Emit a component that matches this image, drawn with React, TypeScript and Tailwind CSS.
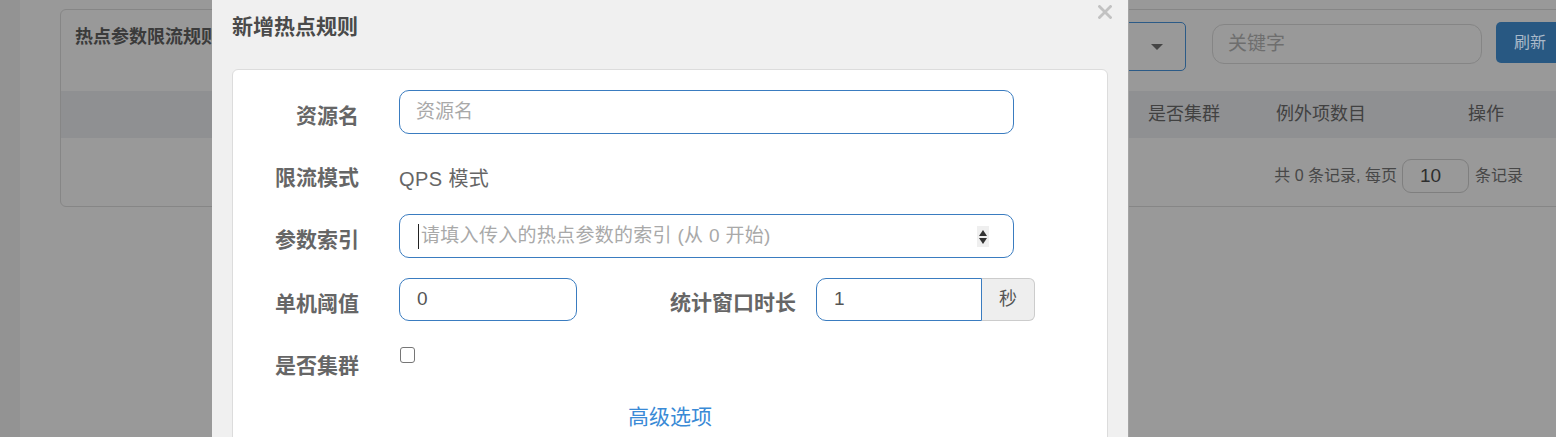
import React from "react";

const font = "font-['Liberation_Sans','Noto_Sans_CJK_SC',sans-serif]";

function Spinner() {
  return (
    <svg width="12" height="21" viewBox="0 0 12 21">
      <rect x="0" y="0" width="12" height="21" fill="#efefef" />
      <polygon points="2,10 10,10 6,4" fill="#333" />
      <polygon points="2,12 10,12 6,18" fill="#333" />
    </svg>
  );
}

function CloseIcon() {
  return (
    <svg width="14" height="14" viewBox="0 0 14 14" aria-label="close">
      <path d="M1.5 1.5 L12.5 12.5 M12.5 1.5 L1.5 12.5" stroke="#c2c2c2" strokeWidth="2.8" strokeLinecap="square" />
    </svg>
  );
}

function Label(props: { children: React.ReactNode }) {
  return (
    <div className="w-[126px] shrink-0 text-right pt-[11px] text-[21px] leading-[30px] font-bold text-[#666]">
      {props.children}
    </div>
  );
}

function BackgroundPage() {
  return (
    <div className="flex h-full">
      <div className="w-[20px] shrink-0 bg-[#939393]" />
      <div className="pl-[40px] pt-[9px]">
        <div className="w-[1520px] h-[198px] border border-[#868686] rounded-[6px] overflow-hidden">
          <div className="flex justify-between h-[81px]">
            <div className="pl-[14px] pt-[14px] text-[18px] leading-[26px] font-bold text-[#3b3b3b]">热点参数限流规则</div>
            <div className="flex items-start pt-[12px] pr-[15px]">
              <div className="w-[300px] h-[49px] border border-[#2c5b87] rounded-[5px] flex items-center justify-end pr-[22px]">
                <svg width="12" height="6" viewBox="0 0 12 6">
                  <polygon points="0,0 12,0 6,6" fill="#454545" />
                </svg>
              </div>
              <div className="ml-[26px] mt-[2px] w-[270px] h-[40px] rounded-[12px] border border-[#858585] pl-[15px] flex items-center text-[19px] text-[#6e6e6e]">
                关键字
              </div>
              <div className="ml-[14px] w-[68px] h-[41px] rounded-[5px] bg-[#285882] flex items-center justify-center text-[16px] text-[#a9b9c9]">
                刷新
              </div>
            </div>
          </div>
          <div className="flex justify-end items-center h-[47px] bg-[#8f9092] text-[18px] text-[#414141]">
            <div className="w-[128px]">是否集群</div>
            <div className="w-[192px]">例外项数目</div>
            <div className="w-[111px]">操作</div>
          </div>
          <div className="flex justify-end items-center pr-[56px] mt-[21px] text-[16px] text-[#474747]">
            <span>共 0 条记录, 每页</span>
            <div className="ml-[5px] w-[67px] h-[34px] rounded-[9px] border border-[#7f7f7f] pl-[17px] flex items-center text-[19px] text-[#2e2e2e]">
              10
            </div>
            <span className="ml-[6px]">条记录</span>
          </div>
        </div>
      </div>
    </div>
  );
}

function Modal() {
  return (
    <div className="absolute left-[212px] top-0 w-[917px] h-[520px] bg-[#f0f0f0] border-r border-[#a4a4a4]">
      <div className="flex justify-between h-[69px]">
        <div className="pl-[20px] pt-[12px] text-[21px] leading-[30px] font-bold text-[#4a4a4a]">新增热点规则</div>
        <div className="pr-[16px] pt-[5px]">
          <CloseIcon />
        </div>
      </div>
      <div className="mx-[20px] h-[430px] bg-white border border-[#dcdcdc] rounded-[6px] pt-[20px]">
        <div className="flex items-start h-[44px] mb-[18px]">
          <Label>资源名</Label>
          <div className="ml-[40px] w-[615px] h-[44px] rounded-[10px] border border-[#3a7cc0] pl-[16px] flex items-center text-[19px] text-[#a9a9a9]">
            资源名
          </div>
        </div>

        <div className="flex items-start h-[44px] mb-[18px]">
          <Label>限流模式</Label>
          <div className="ml-[40px] pt-[12px] text-[20px] leading-[30px] tracking-[0.4px] text-[#666]">QPS 模式</div>
        </div>

        <div className="flex items-start h-[44px] mb-[20px]">
          <Label>参数索引</Label>
          <div className="ml-[40px] w-[615px] h-[44px] rounded-[10px] border border-[#3a7cc0] pl-[18px] pr-[24px] flex items-center justify-between">
            <div className="flex items-center text-[19px] tracking-[0.3px] text-[#a9a9a9]">
              <span className="w-px h-[25px] bg-[#222] mr-[2px]" />
              请填入传入的热点参数的索引 (从 0 开始)
            </div>
            <Spinner />
          </div>
        </div>

        <div className="flex items-start h-[44px] mb-[18px]">
          <Label>单机阈值</Label>
          <div className="ml-[40px] w-[178px] h-[43px] rounded-[10px] border border-[#3a7cc0] pl-[17px] flex items-center text-[19px] text-[#555]">
            0
          </div>
          <div className="ml-[93px] pt-[10px] text-[21px] leading-[30px] font-bold text-[#666]">统计窗口时长</div>
          <div className="ml-[20px] flex">
            <div className="w-[166px] h-[43px] rounded-l-[10px] border border-[#3a7cc0] pl-[17px] flex items-center text-[19px] text-[#555]">
              1
            </div>
            <div className="w-[53px] h-[43px] rounded-r-[6px] border border-l-0 border-[#cccccc] bg-[#eeeeee] flex items-center justify-center text-[18px] text-[#555]">
              秒
            </div>
          </div>
        </div>

        <div className="flex items-start h-[44px]">
          <Label>是否集群</Label>
          <div className="ml-[41px] mt-[7px] w-[15px] h-[16px] rounded-[3px] border-[1.5px] border-[#767676] bg-white" />
        </div>

        <div className="mt-[18px] text-center text-[21px] leading-[30px] text-[#3a8ad6]">高级选项</div>
      </div>
    </div>
  );
}

export default function App() {
  return (
    <div className={`relative w-[1556px] h-[437px] overflow-hidden bg-[#999999] ${font}`}>
      <BackgroundPage />
      <Modal />
    </div>
  );
}
